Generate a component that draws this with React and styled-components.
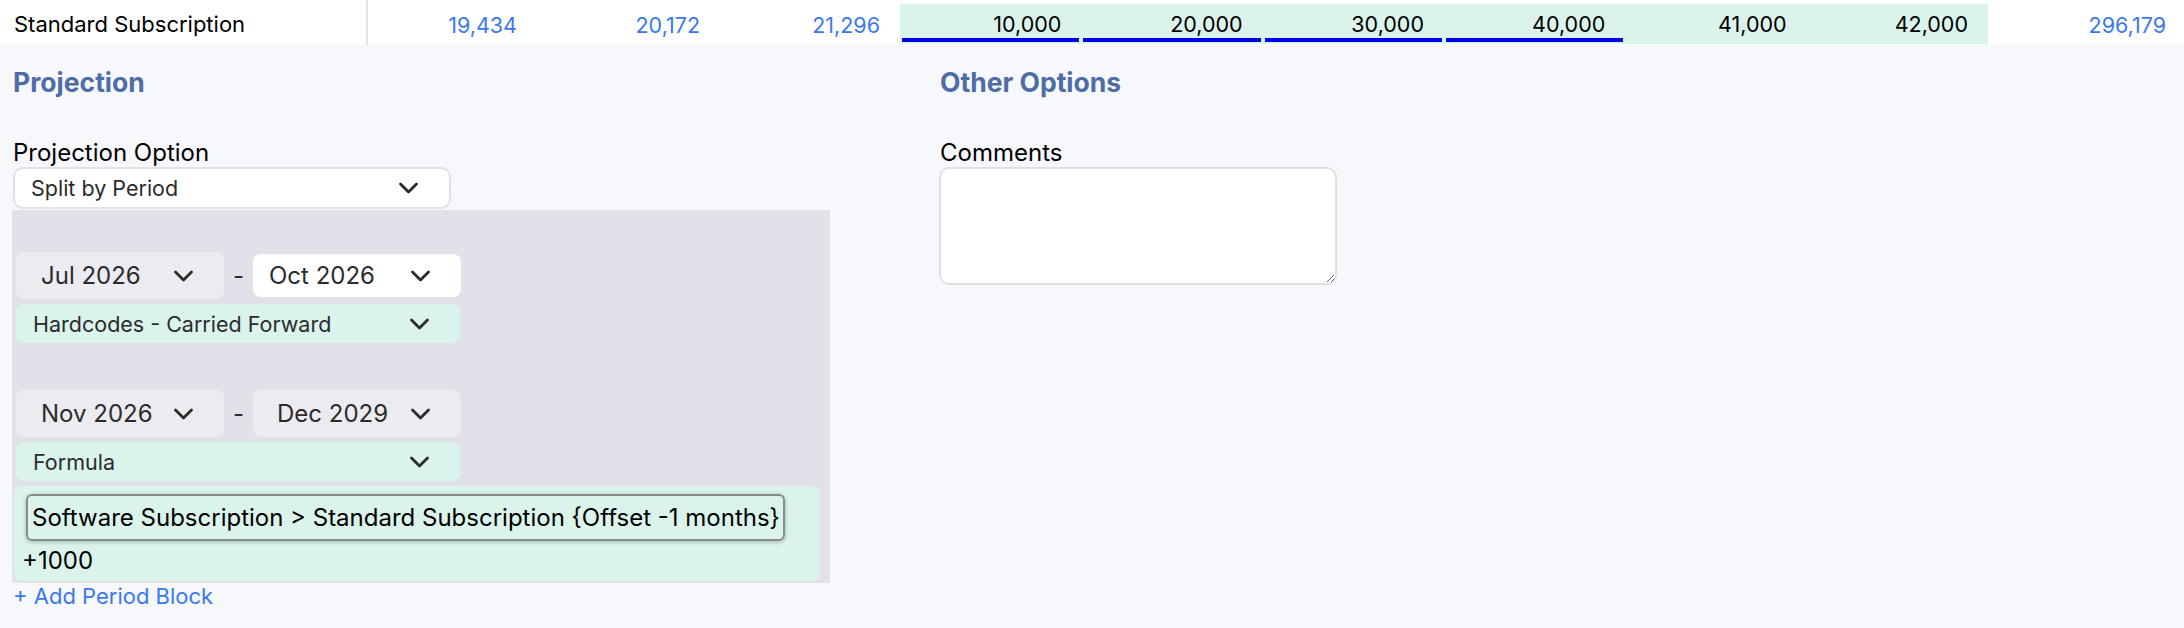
import React from 'react';
import styled, { createGlobalStyle } from 'styled-components';

const GlobalStyle = createGlobalStyle`
  html, body {
    margin: 0;
    padding: 0;
    background: #f7f8fc;
  }
  body {
    font-family: Inter, "Noto Sans", sans-serif;
    color: #000;
  }
  * {
    box-sizing: border-box;
  }
`;

const Page = styled.div`
  width: 2184px;
  min-height: 628px;
  background: #f7f8fc;
`;

/* ---------- top data row ---------- */

const Row = styled.div`
  display: flex;
  height: 45px;
  background: #fff;
`;

const LabelCell = styled.div`
  flex: none;
  width: 368px;
  display: flex;
  align-items: center;
  padding: 3px 0 0 14px;
  border-right: 2px solid #e4e4e8;
  font-size: 22px;
`;

const NumCell = styled.div`
  flex: ${p => (p.$w ? 'none' : '1')};
  width: ${p => (p.$w ? `${p.$w}px` : 'auto')};
  display: flex;
  align-items: center;
  justify-content: flex-end;
  padding: 4px ${p => (p.$last ? 18 : 20)}px 0 0;
  font-size: 21.5px;
  color: #3a78f2;
`;

const InputCell = styled.div`
  flex: none;
  position: relative;
  width: ${p => p.$w}px;
  margin: 4px 0 1px;
  display: flex;
  align-items: center;
  justify-content: flex-end;
  padding-right: 20px;
  background: #daf3eb;
  font-size: 21.5px;
  color: #000;

  &::after {
    content: '';
    display: ${p => (p.$underline ? 'block' : 'none')};
    position: absolute;
    left: 2px;
    right: 2px;
    bottom: 2px;
    height: 4px;
    background: #0000ee;
  }
`;

/* ---------- body ---------- */

const Body = styled.div`
  display: flex;
  gap: 109px;
  padding: 21px 0 0 12px;
`;

const Column = styled.div`
  flex: none;
  width: ${p => p.$w}px;
  display: flex;
  flex-direction: column;
  align-items: flex-start;
`;

const Heading = styled.h2`
  margin: 0 0 41px 1px;
  font-size: 26.5px;
  line-height: 32px;
  font-weight: 700;
  color: #4e6ca6;
`;

const FieldLabel = styled.div`
  margin-left: 1px;
  font-size: 24px;
  line-height: 28px;
`;

const SelectBox = styled.div`
  flex: none;
  display: flex;
  align-items: center;
  justify-content: space-between;
  width: ${p => p.$w}px;
  height: ${p => p.$h}px;
  padding: 0 30px 0 ${p => p.$pl}px;
  border-radius: ${p => (p.$bordered ? 10 : 8)}px;
  border: ${p => (p.$bordered ? '2px solid #e1e2e7' : 'none')};
  background: ${p => p.$bg};
  font-size: ${p => p.$fs}px;
  color: #2b2b2e;
  white-space: nowrap;
`;

const ProjectionSelect = styled(SelectBox)`
  margin-left: 1px;
`;

const Panel = styled.div`
  width: 818px;
  margin-top: 1px;
  padding: 42px 10px 2px 4px;
  background: #e1e1ea;
  display: flex;
  flex-direction: column;
`;

const PeriodBlock = styled.div`
  display: flex;
  flex-direction: column;
  align-items: flex-start;
  gap: 5px;

  & + & {
    margin-top: 47px;
  }
`;

const DateRow = styled.div`
  display: flex;
  align-items: center;
`;

const Dash = styled.span`
  width: 29px;
  text-align: center;
  font-size: 24px;
  color: #2b2b2e;
`;

const FormulaBlock = styled.div`
  width: 806px;
  margin-left: -2px;
  padding: 8px 8px 5px;
  border-radius: 8px;
  background: #daf3eb;
`;

const Token = styled.div`
  display: inline-flex;
  align-items: center;
  height: 47px;
  margin-left: 4px;
  padding: 0 3px 0 4px;
  border: 2px solid #8a8a8a;
  border-radius: 6px;
  box-shadow: 0 1px 4px rgba(0, 0, 0, 0.25);
  font-size: 24px;
  white-space: nowrap;
`;

const FormulaText = styled.div`
  margin-top: 5px;
  font-size: 24px;
  line-height: 30px;
`;

const AddLink = styled.a`
  margin-left: 1px;
  font-size: 22px;
  line-height: 26px;
  color: #3a78f2;
  text-decoration: none;
  cursor: pointer;
`;

const Comments = styled.textarea`
  width: 398px;
  height: 118px;
  border: 2px solid #dfe0e5;
  border-radius: 10px;
  background: #fff;
  font-family: inherit;
  font-size: 20px;
  outline: none;
`;

function Chevron() {
  return (
    <svg width="21" height="12" viewBox="0 0 21 12" fill="none">
      <polyline
        points="2.5,2 10.5,10 18.5,2"
        stroke="#2b2b2e"
        strokeWidth="2.8"
        strokeLinecap="round"
        strokeLinejoin="round"
      />
    </svg>
  );
}

function Select({ children, ...rest }) {
  return (
    <SelectBox {...rest}>
      <span>{children}</span>
      <Chevron />
    </SelectBox>
  );
}

const dateGray = { $w: 208, $h: 47, $pl: 25, $bg: '#ebebf0', $fs: 24 };
const dateWhite = { $w: 208, $h: 43, $pl: 16, $bg: '#fff', $fs: 24 };
const typeGreen = { $w: 444, $h: 39, $pl: 17, $bg: '#daf3eb', $fs: 21.5 };

const inputs = [
  { v: '10,000', u: true },
  { v: '20,000', u: true },
  { v: '30,000', u: true },
  { v: '40,000', u: true },
  { v: '41,000', u: false },
  { v: '42,000', u: false },
];

export default function App() {
  return (
    <Page>
      <GlobalStyle />
      <Row>
        <LabelCell>Standard Subscription</LabelCell>
        <NumCell $w={169}>19,434</NumCell>
        <NumCell $w={183}>20,172</NumCell>
        <NumCell $w={180}>21,296</NumCell>
        {inputs.map(c => (
          <InputCell key={c.v} $w={181.33} $underline={c.u}>
            {c.v}
          </InputCell>
        ))}
        <NumCell $last>296,179</NumCell>
      </Row>

      <Body>
        <Column $w={818}>
          <Heading>Projection</Heading>
          <FieldLabel>Projection Option</FieldLabel>
          <ProjectionSelect $w={438} $h={42} $pl={16} $bg="#fff" $fs={21.5} $bordered>
            <span>Split by Period</span>
            <Chevron />
          </ProjectionSelect>

          <Panel>
            <PeriodBlock>
              <DateRow>
                <Select {...dateGray}>Jul 2026</Select>
                <Dash>-</Dash>
                <Select {...dateWhite}>Oct 2026</Select>
              </DateRow>
              <Select {...typeGreen}>Hardcodes - Carried Forward</Select>
            </PeriodBlock>

            <PeriodBlock>
              <DateRow>
                <Select {...dateGray}>Nov 2026</Select>
                <Dash>-</Dash>
                <Select {...dateGray} $pl={24}>Dec 2029</Select>
              </DateRow>
              <Select {...typeGreen}>Formula</Select>
              <FormulaBlock>
                <Token>Software Subscription &gt; Standard Subscription {'{'}Offset -1 months{'}'}</Token>
                <FormulaText>+1000</FormulaText>
              </FormulaBlock>
            </PeriodBlock>
          </Panel>

          <AddLink>+ Add Period Block</AddLink>
        </Column>

        <Column $w={398}>
          <Heading>Other Options</Heading>
          <FieldLabel>Comments</FieldLabel>
          <Comments />
        </Column>
      </Body>
    </Page>
  );
}
